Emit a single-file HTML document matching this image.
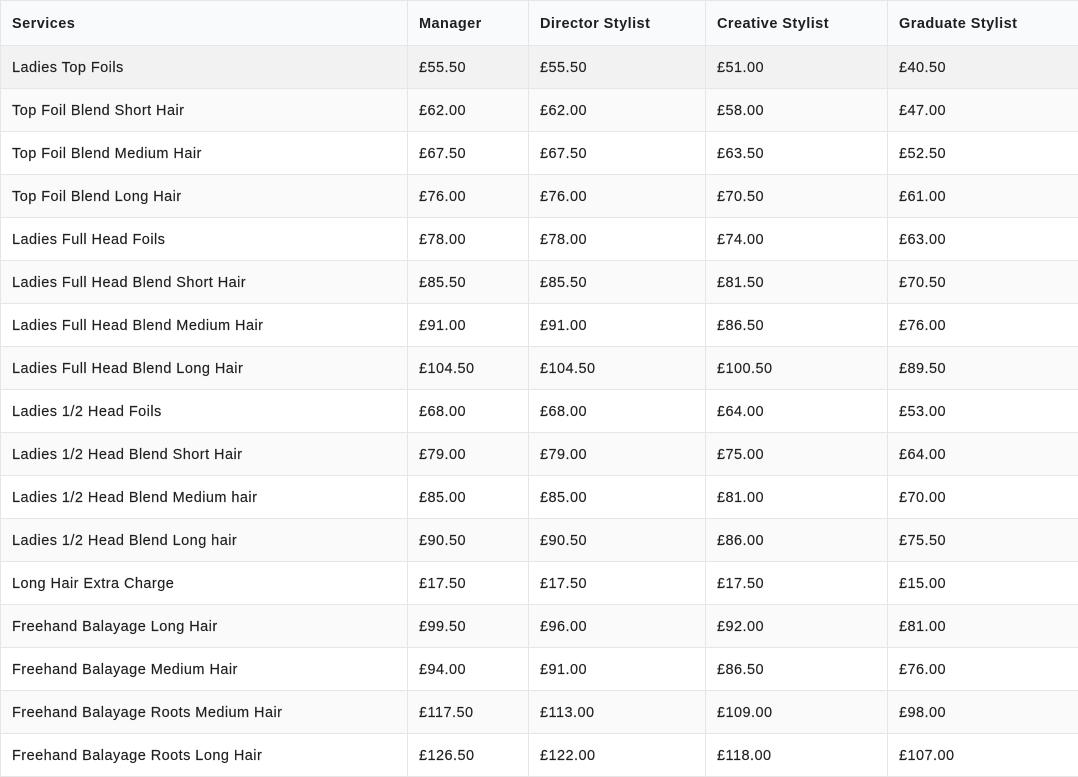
<!DOCTYPE html>
<html><head><meta charset="utf-8"><style>
body{margin:0;background:#fff;font-family:"Liberation Sans",sans-serif;color:#1f1f1f;}
table{border-collapse:collapse;position:absolute;left:0;top:0;width:1080px;table-layout:fixed;}
td,th{border:1px solid #e6e6e6;padding:2px 0 0 11px;height:40px;font-size:14.5px;letter-spacing:0.45px;text-align:left;white-space:nowrap;}
td{-webkit-text-stroke:0.15px #1f1f1f;}
th{height:42px;font-weight:bold;background:#f9fafb;padding-bottom:0;}
tr:nth-child(even) td{background:#fafafa;}
tr.h td{background:#f2f2f2;}
</style></head><body>
<table>
<colgroup><col style="width:407px"><col style="width:121px"><col style="width:177px"><col style="width:182px"><col style="width:193px"></colgroup>
<thead><tr><th>Services</th><th>Manager</th><th>Director Stylist</th><th>Creative Stylist</th><th>Graduate Stylist</th></tr></thead>
<tbody>
<tr class="h"><td>Ladies Top Foils</td><td>£55.50</td><td>£55.50</td><td>£51.00</td><td>£40.50</td></tr>
<tr><td>Top Foil Blend Short Hair</td><td>£62.00</td><td>£62.00</td><td>£58.00</td><td>£47.00</td></tr>
<tr><td>Top Foil Blend Medium Hair</td><td>£67.50</td><td>£67.50</td><td>£63.50</td><td>£52.50</td></tr>
<tr><td>Top Foil Blend Long Hair</td><td>£76.00</td><td>£76.00</td><td>£70.50</td><td>£61.00</td></tr>
<tr><td>Ladies Full Head Foils</td><td>£78.00</td><td>£78.00</td><td>£74.00</td><td>£63.00</td></tr>
<tr><td>Ladies Full Head Blend Short Hair</td><td>£85.50</td><td>£85.50</td><td>£81.50</td><td>£70.50</td></tr>
<tr><td>Ladies Full Head Blend Medium Hair</td><td>£91.00</td><td>£91.00</td><td>£86.50</td><td>£76.00</td></tr>
<tr><td>Ladies Full Head Blend Long Hair</td><td>£104.50</td><td>£104.50</td><td>£100.50</td><td>£89.50</td></tr>
<tr><td>Ladies 1/2 Head Foils</td><td>£68.00</td><td>£68.00</td><td>£64.00</td><td>£53.00</td></tr>
<tr><td>Ladies 1/2 Head Blend Short Hair</td><td>£79.00</td><td>£79.00</td><td>£75.00</td><td>£64.00</td></tr>
<tr><td>Ladies 1/2 Head Blend Medium hair</td><td>£85.00</td><td>£85.00</td><td>£81.00</td><td>£70.00</td></tr>
<tr><td>Ladies 1/2 Head Blend Long hair</td><td>£90.50</td><td>£90.50</td><td>£86.00</td><td>£75.50</td></tr>
<tr><td>Long Hair Extra Charge</td><td>£17.50</td><td>£17.50</td><td>£17.50</td><td>£15.00</td></tr>
<tr><td>Freehand Balayage Long Hair</td><td>£99.50</td><td>£96.00</td><td>£92.00</td><td>£81.00</td></tr>
<tr><td>Freehand Balayage Medium Hair</td><td>£94.00</td><td>£91.00</td><td>£86.50</td><td>£76.00</td></tr>
<tr><td>Freehand Balayage Roots Medium Hair</td><td>£117.50</td><td>£113.00</td><td>£109.00</td><td>£98.00</td></tr>
<tr><td>Freehand Balayage Roots Long Hair</td><td>£126.50</td><td>£122.00</td><td>£118.00</td><td>£107.00</td></tr>
</tbody></table>
</body></html>
